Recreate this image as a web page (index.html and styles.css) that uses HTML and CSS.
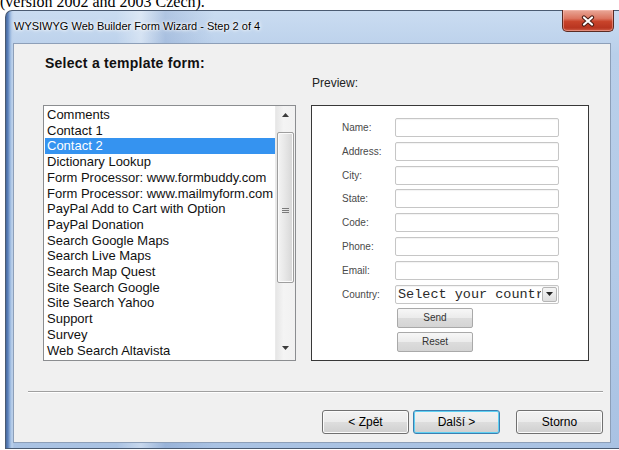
FILE: index.html
```html
<!DOCTYPE html>
<html lang="cs">
<head>
<meta charset="utf-8">
<title>WYSIWYG Web Builder Form Wizard</title>
<link rel="stylesheet" href="styles.css">
</head>
<body>
<p class="caption">(version 2002 and 2003 Czech).</p>
<div class="window">
  <div class="titlebar">
    <span class="title">WYSIWYG Web Builder Form Wizard - Step 2 of 4</span>
    <button class="close" type="button" aria-label="Zavřít">
      <svg width="16" height="12" viewBox="0 0 16 12">
        <path d="M4 2.5 L12 9.5 M12 2.5 L4 9.5" stroke="#4a1c14" stroke-width="4.2" stroke-linecap="round"/>
        <path d="M4 2.5 L12 9.5 M12 2.5 L4 9.5" stroke="#ffffff" stroke-width="2.2" stroke-linecap="round"/>
      </svg>
    </button>
  </div>
  <div class="client">
    <div class="panes">
      <h2 class="pane-heading">Select a template form:</h2>
      <span class="preview-label">Preview:</span>
      <div class="listbox">
        <ul class="items">
          <li>Comments</li>
          <li>Contact 1</li>
          <li class="selected">Contact 2</li>
          <li>Dictionary Lookup</li>
          <li>Form Processor: www.formbuddy.com</li>
          <li>Form Processor: www.mailmyform.com</li>
          <li>PayPal Add to Cart with Option</li>
          <li>PayPal Donation</li>
          <li>Search Google Maps</li>
          <li>Search Live Maps</li>
          <li>Search Map Quest</li>
          <li>Site Search Google</li>
          <li>Site Search Yahoo</li>
          <li>Support</li>
          <li>Survey</li>
          <li>Web Search Altavista</li>
        </ul>
        <div class="scrollbar">
          <div class="sb-btn">
            <svg width="7" height="4" viewBox="0 0 7 4"><path d="M0 4 L3.5 0 L7 4 Z" fill="#3c3c3c"/></svg>
          </div>
          <div class="sb-track">
            <div class="sb-thumb">
              <svg width="7" height="6" viewBox="0 0 7 6"><path d="M0 0.5 H7 M0 2.5 H7 M0 4.5 H7" stroke="#7a7a7a" stroke-width="1"/></svg>
            </div>
          </div>
          <div class="sb-btn sb-btn-down">
            <svg width="7" height="4" viewBox="0 0 7 4"><path d="M0 0 L3.5 4 L7 0 Z" fill="#3c3c3c"/></svg>
          </div>
        </div>
      </div>
      <div class="preview">
        <div class="sample-form">
          <span class="lbl">Name:</span><span class="field"></span>
          <span class="lbl">Address:</span><span class="field"></span>
          <span class="lbl">City:</span><span class="field"></span>
          <span class="lbl">State:</span><span class="field"></span>
          <span class="lbl">Code:</span><span class="field"></span>
          <span class="lbl">Phone:</span><span class="field"></span>
          <span class="lbl">Email:</span><span class="field"></span>
          <span class="lbl">Country:</span>
          <span class="field select">
            <span class="select-value">Select your country</span>
            <span class="select-arrow">
              <svg width="7" height="4" viewBox="0 0 7 4"><path d="M0 0 L3.5 4 L7 0 Z" fill="#222"/></svg>
            </span>
          </span>
          <span class="mini-btn">Send</span>
          <span class="mini-btn">Reset</span>
        </div>
      </div>
    </div>
    <hr class="separator">
    <div class="actions">
      <button class="btn" type="button">&lt; Zpět</button>
      <button class="btn btn-default" type="button">Další &gt;</button>
      <button class="btn btn-cancel" type="button">Storno</button>
    </div>
  </div>
</div>
</body>
</html>
```

FILE: styles.css
```css
* {
  box-sizing: border-box;
}

html,
body {
  margin: 0;
  padding: 0;
  background: #ffffff;
  overflow: hidden;
}

body {
  width: 619px;
  height: 450px;
  font-family: "Liberation Sans", Arial, sans-serif;
  color: #000;
}

/* the line of document text above the dialog, mostly scrolled off */
.caption {
  margin: -6px 0 0 0;
  height: 16px;
  font: 16px/16px "Liberation Serif", "Times New Roman", serif;
  white-space: nowrap;
}

/* Aero-style window frame */
.window {
  margin: 0 0 0 5px;
  width: 614px;
  height: 439px;
  border: 1px solid #4b5b72;
  border-right: 0;
  border-radius: 7px 0 0 0;
  padding: 0 8px 5px 7px;
  display: flex;
  flex-direction: column;
  background:
    linear-gradient(to right, #47699e 0, #5c82bc 2px, #95b4dc 4px, #bcd1eb 6px, rgba(188, 209, 235, 0) 8px),
    linear-gradient(to right, rgba(255, 255, 255, 0) 18%, rgba(255, 255, 255, 0.35) 22%, rgba(110, 140, 190, 0.28) 26%, rgba(255, 255, 255, 0) 34%),
    linear-gradient(#cadcf1, #b9cfea 10%, #b3cae7 60%, #a9c2e3);
}

.titlebar {
  height: 32px;
  display: flex;
  align-items: flex-start;
  margin-right: -3px;
}

.title {
  margin: 8px 0 0 1px;
  font-size: 11px;
  line-height: 15px;
  color: #000;
  text-shadow: 0 0 5px #ffffff, 0 0 3px #ffffff, 0 0 1px #ffffff;
  white-space: nowrap;
}

.close {
  margin: -1px 0 0 auto;
  width: 52px;
  height: 22px;
  padding: 0;
  border: 1px solid #5a2a22;
  border-top: 0;
  border-radius: 0 0 5px 5px;
  background: linear-gradient(#e9a898 0, #dc7560 40%, #c8432a 55%, #b83520 85%, #d0604a);
  box-shadow: inset 0 0 0 1px rgba(255, 200, 190, 0.45);
  display: flex;
  align-items: center;
  justify-content: center;
}

/* dialog body */
.client {
  height: 400px;
  border: 1px solid #8d9fb8;
  background: #f0f0f0;
  padding-left: 14px;
}

.panes {
  margin-left: 15px;
  display: grid;
  grid-template-columns: 253px 278px;
  grid-template-rows: 61px 256px;
  column-gap: 15px;
}

.pane-heading {
  align-self: start;
  margin: 11px 0 0 2px;
  font-size: 14px;
  line-height: 16px;
  letter-spacing: 0.25px;
  font-weight: bold;
  color: #111;
}

.preview-label {
  align-self: end;
  margin: 0 0 14px 1px;
  font-size: 12px;
  line-height: 16px;
  color: #222;
}

/* template list */
.listbox {
  border: 1px solid #8b8d90;
  background: #ffffff;
  display: flex;
  overflow: hidden;
}

.items {
  flex: 1;
  margin: 0;
  padding: 1px 0 0 0;
  list-style: none;
  overflow: hidden;
  font-size: 13px;
  line-height: 15.7px;
  color: #111;
}

.items li {
  padding-left: 3px;
  white-space: nowrap;
}

.items li.selected {
  margin-left: 1px;
  padding-left: 2px;
  background: #3593f0;
  color: #ffffff;
}

.scrollbar {
  width: 20px;
  display: flex;
  flex-direction: column;
  background: linear-gradient(to right, #e6e6e6, #f4f4f4 40%, #f1f1f1);
  border-left: 1px solid #eaeaea;
}

.sb-btn {
  height: 18px;
  display: flex;
  align-items: center;
  justify-content: center;
}

.sb-btn-down {
  margin-bottom: 3px;
}

.sb-track {
  flex: 1;
  padding: 8px 1px 0 1px;
}

.sb-thumb {
  height: 151px;
  border: 1px solid #9e9e9e;
  border-radius: 2px;
  background: linear-gradient(to right, #f4f4f4, #e6e6e6 50%, #d6d6d6);
  box-shadow: inset 0 0 0 1px #fbfbfb;
  display: flex;
  align-items: center;
  justify-content: center;
  padding-top: 6px;
}

/* form preview */
.preview {
  border: 1px solid #383838;
  background: #ffffff;
  padding: 12px 0 0 30px;
}

.sample-form {
  display: grid;
  grid-template-columns: 53px 164px;
  grid-auto-rows: 19px;
  row-gap: 4.8px;
  align-items: center;
}

.lbl {
  font-size: 10px;
  color: #4a4a4a;
  white-space: nowrap;
}

.field {
  height: 19px;
  border: 1px solid #c6c6c6;
  border-radius: 2px;
  background: #ffffff;
  box-shadow: inset 0 1px 1px rgba(0, 0, 0, 0.05);
}

.select {
  display: flex;
  padding-left: 2px;
  font: 13.5px/17px "Liberation Mono", "Courier New", monospace;
  color: #2a2a2a;
}

.select-value {
  flex: 1;
  overflow: hidden;
  white-space: nowrap;
}

.select-arrow {
  width: 15px;
  margin: 1px;
  border: 1px solid #b5b5b5;
  border-radius: 2px;
  background: linear-gradient(#f5f5f5, #dedede);
  display: flex;
  align-items: center;
  justify-content: center;
}

.mini-btn {
  grid-column: 2;
  margin-left: 2px;
  width: 76px;
  height: 20px;
  border: 1px solid #a9a9a9;
  border-radius: 2px;
  background: linear-gradient(#f7f7f7, #ebebeb 50%, #dcdcdc 51%, #d4d4d4);
  font-size: 10px;
  line-height: 18px;
  text-align: center;
  color: #333;
}

.separator {
  margin: 30px 0 0 0;
  width: 575px;
  height: 2px;
  border: 0;
  border-top: 1px solid #a0a0a0;
  border-bottom: 1px solid #ffffff;
}

.actions {
  width: 575px;
  margin-top: 17px;
  display: flex;
  justify-content: flex-end;
}

.btn {
  width: 87px;
  height: 24px;
  padding: 0;
  border: 1px solid #707070;
  border-radius: 3px;
  background: linear-gradient(#f2f2f2 0, #ebebeb 48%, #dddddd 52%, #cfcfcf);
  box-shadow: inset 0 0 0 1px #fbfbfb;
  font-family: "Liberation Sans", Arial, sans-serif;
  font-size: 12px;
  color: #000;
}

.btn-default {
  margin-left: 4px;
  border-color: #3c7fb1;
  box-shadow: inset 0 0 0 1px #5fd0f2;
}

.btn-cancel {
  margin-left: 16px;
}
```
